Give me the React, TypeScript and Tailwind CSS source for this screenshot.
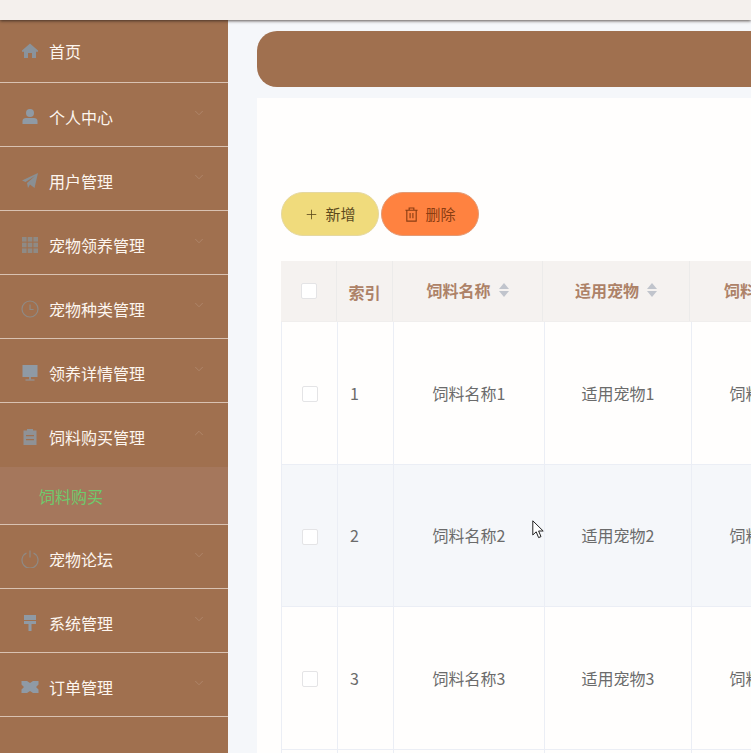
import React from 'react';
import { ChevronDown, ChevronUp, Plus } from 'lucide-react';

const FONT = 'font-["Noto_Sans_CJK_SC","Liberation_Sans",sans-serif]';

const HomeIcon = () => (
  <svg viewBox="0 0 18 18" className="w-[18px] h-[18px] fill-[#8a939c]">
    <path d="M9 1.5 L17 8.5 L17 9.8 L15 9.8 L15 16 L11 16 L11 11 L7 11 L7 16 L3 16 L3 9.8 L1 9.8 L1 8.5 Z" />
  </svg>
);
const UserIcon = () => (
  <svg viewBox="0 0 18 18" className="w-[18px] h-[18px] fill-[#8f9aa5]">
    <circle cx="9" cy="5" r="4" />
    <path d="M1.5 16 L1.5 13 C1.5 11 3 10 5 10 L13 10 C15 10 16.5 11 16.5 13 L16.5 16 Z" />
  </svg>
);
const PlaneIcon = () => (
  <svg viewBox="0 0 18 18" className="w-[18px] h-[18px] fill-[#8a8f93]">
    <path d="M17 1 L13.5 16 L9 12.5 L7 16 L6 11 L14 4 L4.5 10 L1 8.5 Z" />
  </svg>
);
const GridIcon = () => (
  <svg viewBox="0 0 18 18" className="w-[18px] h-[18px] fill-[#8f8a85]">
    <rect x="1" y="1" width="4.6" height="4.6" />
    <rect x="6.7" y="1" width="4.6" height="4.6" />
    <rect x="12.4" y="1" width="4.6" height="4.6" />
    <rect x="1" y="6.7" width="4.6" height="4.6" />
    <rect x="6.7" y="6.7" width="4.6" height="4.6" />
    <rect x="12.4" y="6.7" width="4.6" height="4.6" />
    <rect x="1" y="12.4" width="4.6" height="4.6" />
    <rect x="6.7" y="12.4" width="4.6" height="4.6" />
    <rect x="12.4" y="12.4" width="4.6" height="4.6" />
  </svg>
);
const ClockIcon = () => (
  <svg viewBox="0 0 18 18" className="w-[18px] h-[18px] fill-none stroke-[#8f8a85] stroke-[1.2]">
    <circle cx="9" cy="9" r="8" />
    <path d="M9 4.5 L9 9.5 L12.5 9.5" />
  </svg>
);
const MonitorIcon = () => (
  <svg viewBox="0 0 18 18" className="w-[18px] h-[18px] fill-[#8f9aa5]">
    <rect x="1.5" y="1" width="15" height="12" />
    <rect x="8.2" y="13" width="1.6" height="2.5" />
    <rect x="4.5" y="15.5" width="9" height="1" />
  </svg>
);
const ClipboardIcon = () => (
  <svg viewBox="0 0 18 18" className="w-[18px] h-[18px] fill-[#8f9296]">
    <path d="M6 1 L12 1 L12 2.5 L15.5 2.5 L15.5 17 L2.5 17 L2.5 2.5 L6 2.5 Z M5 7 L5 8.2 L13 8.2 L13 7 Z M5 11 L5 12.2 L13 12.2 L13 11 Z" fillRule="evenodd" />
  </svg>
);
const PowerIcon = () => (
  <svg viewBox="0 0 18 18" className="w-[18px] h-[18px] fill-none stroke-[#8f8a85] stroke-[1.2]">
    <path d="M5.5 3 A8 8 0 1 0 12.5 3" />
    <path d="M9 0.5 L9 7.5" />
  </svg>
);
const BrushIcon = () => (
  <svg viewBox="0 0 18 18" className="w-[18px] h-[18px] fill-[#8f9aa5]">
    <path d="M3 1 L15 1 L15 6 L3 6 Z M3 7 L15 7 L15 10 L10.5 10 L10.5 17 L7.5 17 L7.5 10 L3 10 Z" />
  </svg>
);
const TicketIcon = () => (
  <svg viewBox="0 0 18 18" className="w-[18px] h-[18px] fill-[#8f9aa5]">
    <path d="M0.5 3 L6 3 L9 5 L12 3 L17.5 3 L17.5 6.5 L15 9 L17.5 11.5 L17.5 15 L12 15 L9 13 L6 15 L0.5 15 L0.5 11.5 L3 9 L0.5 6.5 Z" />
  </svg>
);

const TrashIcon = () => (
  <svg viewBox="0 0 16 16" className="w-[15px] h-[15px] fill-none stroke-[#8a3d12] stroke-[1.2]">
    <path d="M1.5 3.5 L14.5 3.5 M5.5 3.5 L5.5 1 L10.5 1 L10.5 3.5 M3 3.5 L3 15 L13 15 L13 3.5 M6.5 6.5 L6.5 12 M9.5 6.5 L9.5 12" />
  </svg>
);

const SortCaret = () => (
  <span className="inline-flex flex-col gap-[2px] ml-[8px]">
    <span className="w-0 h-0 border-x-[5px] border-x-transparent border-b-[6px] border-b-[#c0c4cc]" />
    <span className="w-0 h-0 border-x-[5px] border-x-transparent border-t-[6px] border-t-[#c0c4cc]" />
  </span>
);

const CheckBox = () => (
  <span className="block w-[16px] h-[16px] rounded-[2px] border border-[#e4e4e6] bg-white" />
);

const menu = [
  { label: '个人中心', Icon: UserIcon },
  { label: '用户管理', Icon: PlaneIcon },
  { label: '宠物领养管理', Icon: GridIcon },
  { label: '宠物种类管理', Icon: ClockIcon },
  { label: '领养详情管理', Icon: MonitorIcon },
];

const menuAfter = [
  { label: '宠物论坛', Icon: PowerIcon },
  { label: '系统管理', Icon: BrushIcon },
  { label: '订单管理', Icon: TicketIcon },
];

const MenuRow = ({ label, Icon, open, last }: { label: string; Icon: React.FC; open?: boolean; last?: boolean }) => (
  <div className={`h-[64px] flex items-center pl-[21px] pr-[22px] pt-[4px] ${last ? '' : 'border-b border-[#d9c2b2]'}`}>
    <span className="w-[18px] flex justify-center"><Icon /></span>
    <span className="ml-[10px] text-[16px] text-[#fdf6ef]">{label}</span>
    <span className="ml-auto -translate-y-[4px] text-[#b48e74]">
      {open ? <ChevronUp size={14} strokeWidth={1.2} /> : <ChevronDown size={14} strokeWidth={1.2} />}
    </span>
  </div>
);

const rows = [1, 2, 3, 4];

export default function App() {
  return (
    <div className={`${FONT} h-[753px] w-full overflow-hidden flex flex-col bg-[#f5f7fa]`}>
      {/* Top bar */}
      <div className="h-[20px] shrink-0 bg-[#f4f0ed] shadow-[0_1px_3px_rgba(40,30,25,0.75)] relative z-10" />

      <div className="flex flex-1 min-h-0">
        {/* Sidebar */}
        <aside className="w-[228px] shrink-0 bg-[#a0704f]">
          <div className="h-[63px] flex items-center pl-[21px] border-b border-[#d9c2b2]">
            <span className="w-[18px] flex justify-center"><HomeIcon /></span>
            <span className="ml-[10px] text-[16px] text-[#fdf6ef]">首页</span>
          </div>
          {menu.map((m) => (
            <MenuRow key={m.label} label={m.label} Icon={m.Icon} />
          ))}
          <MenuRow label="饲料购买管理" Icon={ClipboardIcon} open last />
          <div className="h-[58px] flex items-center pl-[39px] bg-[#a5775c] border-b border-[#d9c2b2] text-[16px] text-[#6fca6c]">
            饲料购买
          </div>
          {menuAfter.map((m) => (
            <MenuRow key={m.label} label={m.label} Icon={m.Icon} />
          ))}
        </aside>

        {/* Main */}
        <main className="flex-1 min-w-0 overflow-hidden pl-[29px] pt-[11px]">
          <div className="h-[56px] w-[1200px] rounded-[20px] bg-[#a0704f]" />

          <div className="mt-[11px] w-[1200px] h-[700px] bg-[#fffefd] pl-[24px] pt-[94px]">
            <div className="flex gap-[2px]">
              <button className="w-[98px] h-[44px] rounded-full bg-[#f0db7c] border border-[#e5d8a0] flex items-center justify-center gap-[6px] text-[15px] text-[#5c4a1c]">
                <Plus size={15} strokeWidth={1.3} />
                新增
              </button>
              <button className="w-[98px] h-[44px] rounded-full bg-[#ff8240] border border-[#e39a75] flex items-center justify-center gap-[6px] text-[15px] text-[#8a3d12]">
                <TrashIcon />
                删除
              </button>
            </div>

            {/* Table head */}
            <div className="mt-[25px] flex h-[61px] bg-[#f5f2f0] text-[16px] font-bold text-[#ad8268] border-b border-[#f0eeed]">
              <div className="w-[56px] flex items-center justify-center border-r border-[#ecebea] pl-[1px]"><CheckBox /></div>
              <div className="w-[56px] flex items-center justify-center border-r border-[#ecebea] pt-[2px]">索引</div>
              <div className="w-[150px] flex items-center justify-center border-r border-[#ecebea] pb-[2px]">饲料名称<SortCaret /></div>
              <div className="w-[147px] flex items-center justify-center border-r border-[#ecebea] pb-[2px]">适用宠物<SortCaret /></div>
              <div className="w-[150px] flex items-center justify-center pb-[2px]">饲料类型<SortCaret /></div>
            </div>

            {/* Table body */}
            {rows.map((n) => (
              <div key={n} className={`flex h-[142.5px] text-[16px] text-[#6b6b6b] border-b border-[#ebeef5] border-l ${n === 2 ? 'bg-[#f5f7fa]' : ''}`}>
                <div className="w-[56px] flex items-center justify-center border-r border-[#ebeef5] pt-[3px]"><CheckBox /></div>
                <div className="w-[56px] flex items-center pl-[12px] border-r border-[#ebeef5]">{n}</div>
                <div className="w-[151px] flex items-center justify-center border-r border-[#ebeef5]">饲料名称{n}</div>
                <div className="w-[147px] flex items-center justify-center border-r border-[#ebeef5]">适用宠物{n}</div>
                <div className="w-[148px] flex items-center justify-center">饲料类型{n}</div>
              </div>
            ))}
          </div>
        </main>
      </div>

      {/* Mouse pointer */}
      <svg viewBox="0 0 13 20" className="absolute left-[532px] top-[520px] w-[13px] h-[20px] fill-white stroke-[#222] stroke-[1]">
        <path d="M0.8 0.8 L0.8 15 L4.2 11.8 L6.6 17.6 L9 16.6 L6.6 11 L11.2 11 Z" />
      </svg>
    </div>
  );
}
